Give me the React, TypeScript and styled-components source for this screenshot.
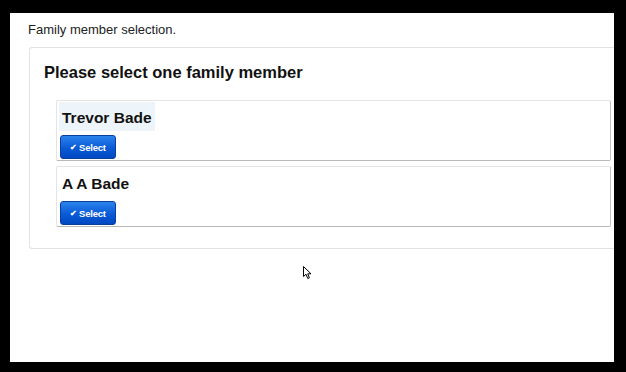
import styled, { createGlobalStyle } from 'styled-components';

const GlobalStyle = createGlobalStyle`
  html, body {
    margin: 0;
    padding: 0;
    background: #000;
  }
  body {
    font-family: "Liberation Sans", Arial, sans-serif;
  }
`;

const Frame = styled.div`
  width: 626px;
  height: 372px;
  box-sizing: border-box;
  padding: 13px 12px 10px 10px;
  background: #000;
`;

const Page = styled.div`
  position: relative;
  height: 100%;
  background: #fff;
  overflow: hidden;
  padding: 9px 0 0 18px;
  box-sizing: border-box;
`;

const Intro = styled.div`
  font-size: 13px;
  color: #222;
  margin-bottom: 10px;
`;

const Panel = styled.div`
  border: 1px solid #e2e2e2;
  border-right: none;
  border-radius: 3px 0 0 3px;
  margin-left: 1px;
  padding: 15px 0 21px 14px;
`;

const Heading = styled.h2`
  margin: 0 0 18px;
  font-size: 16.5px;
  font-weight: bold;
  color: #111;
`;

const CardList = styled.div`
  display: flex;
  flex-direction: column;
  gap: 5px;
  padding-left: 12px;
  padding-right: 3px;
`;

const Card = styled.div`
  border: 1px solid #e4e4e4;
  border-right-color: #c4c4c4;
  border-bottom-color: #b8b8b8;
  border-radius: 2px;
  height: 61px;
  box-sizing: border-box;
  padding: 1px 2px 0;
`;

const Name = styled.div<{ $tint: boolean }>`
  display: inline-block;
  font-family: "Liberation Sans", Arial, sans-serif;
  font-size: 15.5px;
  font-weight: bold;
  color: #111;
  padding: 7px ${p => (p.$tint ? '3px' : '4px')} 4px 3px;
  background: ${p => (p.$tint ? '#eef5fa' : 'transparent')};
`;

const SelectButton = styled.button`
  display: flex;
  align-items: center;
  justify-content: center;
  gap: 2px;
  width: 56px;
  height: 24px;
  margin: 4px 0 0 1px;
  padding: 0;
  border: 1px solid #0a3f9e;
  border-radius: 3px;
  background: linear-gradient(#2b83ec, #0a5ad6 55%, #0048c2);
  color: #fff;
  font-family: "Liberation Sans", Arial, sans-serif;
  font-size: 9.5px;
  font-weight: bold;
  letter-spacing: -0.2px;
  cursor: pointer;
`;

const Check = styled.span`
  font-size: 8px;
`;

const Cursor = styled.svg`
  position: absolute;
  left: 293px;
  top: 253px;
`;

const members = ['Trevor Bade', 'A A Bade'];

export default function App() {
  return (
    <>
      <GlobalStyle />
      <Frame>
        <Page>
          <Intro>Family member selection.</Intro>
          <Panel>
            <Heading>Please select one family member</Heading>
            <CardList>
              {members.map((m, i) => (
                <Card key={m}>
                  <Name $tint={i === 0}>{m}</Name>
                  <SelectButton>
                    <Check>✔</Check>
                    <span>Select</span>
                  </SelectButton>
                </Card>
              ))}
            </CardList>
          </Panel>
          <Cursor width="9" height="14" viewBox="0 0 9 14">
            <path d="M0.5 0.5 L0.5 10.5 L3 8.3 L4.8 12.5 L6.4 11.8 L4.7 7.8 L8 7.8 Z" fill="#fff" stroke="#000" strokeWidth="1" />
          </Cursor>
        </Page>
      </Frame>
    </>
  );
}
